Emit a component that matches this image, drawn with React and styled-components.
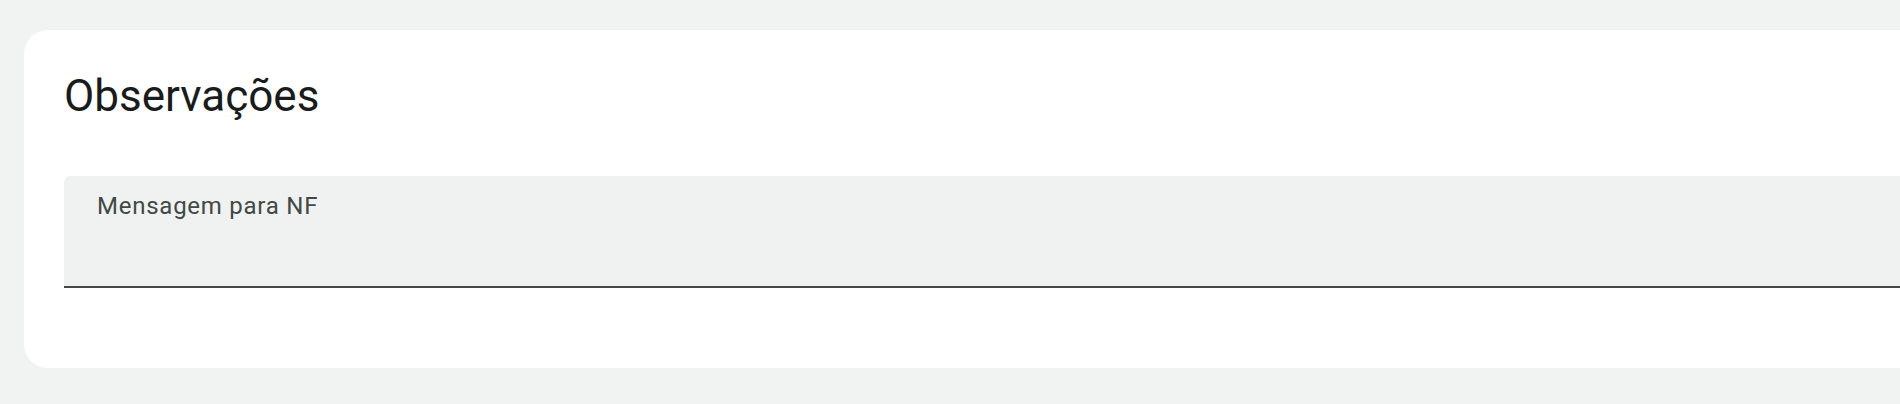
import React from "react"
import styled, { createGlobalStyle } from "styled-components"

const GlobalStyle = createGlobalStyle`
  html, body {
    margin: 0;
    padding: 0;
    background: #f1f3f2;
    font-family: Roboto, "Noto Sans", sans-serif;
    overflow: hidden;
  }
`

const Page = styled.div`
  padding: 30px 0 0 24px;
`

const Card = styled.section`
  background: #ffffff;
  border-radius: 24px 0 0 24px;
  height: 338px;
  box-sizing: border-box;
  padding: 40px 0 0 40px;
`

const Title = styled.h2`
  margin: 0;
  font-size: 44px;
  font-weight: 400;
  line-height: 52px;
  color: #1a1c1b;
`

const Field = styled.label`
  display: block;
  margin-top: 54px;
  height: 112px;
  box-sizing: border-box;
  background: #f0f2f1;
  border-radius: 6px 0 0 0;
  border-bottom: 2px solid #404944;
  padding: 14px 33px 0;
`

const Label = styled.span`
  font-size: 24px;
  line-height: 32px;
  letter-spacing: 0.75px;
  color: #404944;
`

export default function App() {
  return (
    <>
      <GlobalStyle />
      <Page>
        <Card>
          <Title>Observações</Title>
          <Field>
            <Label>Mensagem para NF</Label>
          </Field>
        </Card>
      </Page>
    </>
  )
}
